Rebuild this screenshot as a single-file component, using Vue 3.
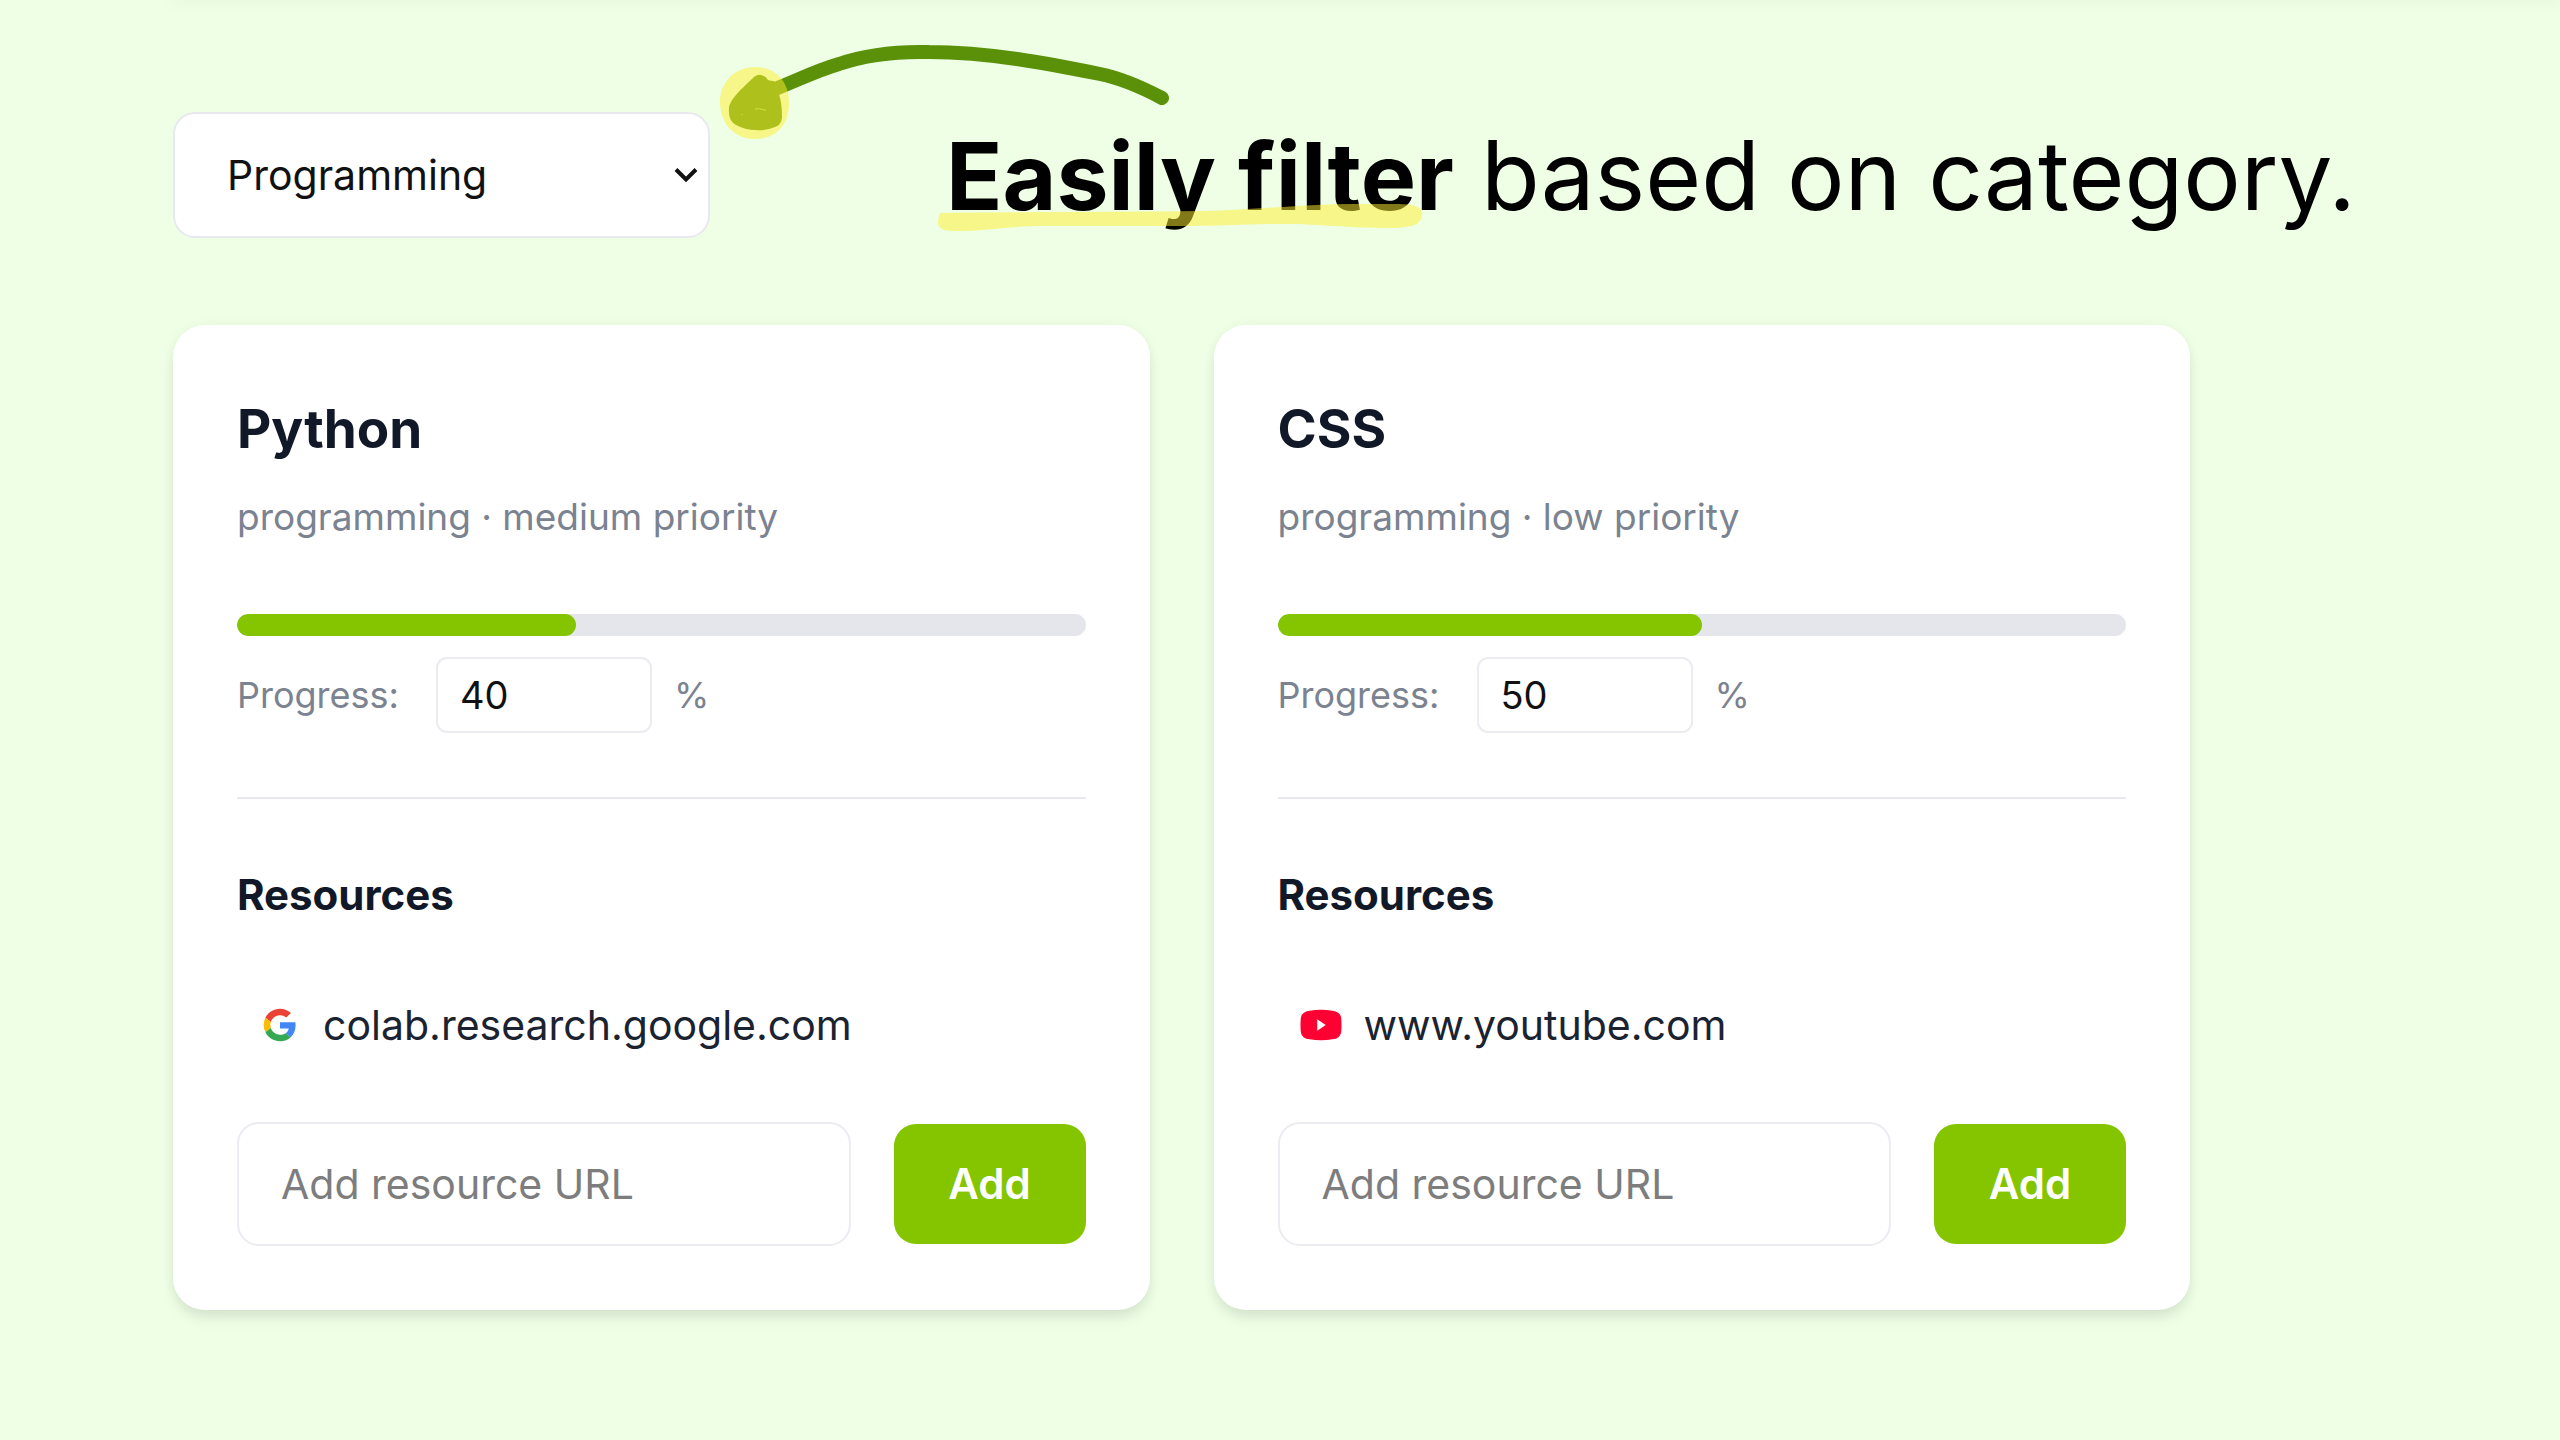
<script setup>
import { ref } from 'vue'

const category = ref('programming')
const categories = [
  { value: 'all', label: 'All categories' },
  { value: 'programming', label: 'Programming' },
  { value: 'design', label: 'Design' }
]

const skills = ref([
  { id: 'python', name: 'Python', meta: 'programming · medium priority', progress: 40, site: 'colab.research.google.com', icon: 'google', draft: '' },
  { id: 'css', name: 'CSS', meta: 'programming · low priority', progress: 50, site: 'www.youtube.com', icon: 'youtube', draft: '' }
])
</script>

<template>
  <main class="page">
    <div class="panel-edge"></div>

    <header class="hero">
      <div class="filter">
        <select v-model="category" class="filter-select" aria-label="Category">
          <option v-for="c in categories" :key="c.value" :value="c.value">{{ c.label }}</option>
        </select>
        <svg class="chevron" viewBox="0 0 24 16" aria-hidden="true">
          <path d="M2 2.500 L12 12.500 L22 2.500" fill="none" stroke="#111" stroke-width="4" />
        </svg>
      </div>

      <h1 class="headline">
        <strong class="marked">Easily filter<svg class="marker" viewBox="0 0 486 30" aria-hidden="true">
          <path d="M3 10 C90 9 180 9 266 8 C320 7 365 1 417 1 H462 Q480 1 484 7 Q487 14 482 19 Q477 25 450 25 C410 25 385 21 346 21 C310 21 290 23 250 23 H110 C70 23 50 28 18 28 C5 28 1 25 1 19 Q1 15 3 10 Z" fill="#ffee30" fill-opacity=".51" />
        </svg></strong> based on category.
      </h1>

      <svg class="arrow" viewBox="0 0 450 100" aria-hidden="true">
        <path d="M55 49 C76 41 95 31 119 24 C142 16 170 11 209 12 C270 12 330 24 380 34 C405 39 425 49 442 58" fill="none" stroke="#5a9108" stroke-width="14" stroke-linecap="round" stroke-linejoin="round" />
        <path d="M41 35 Q46 36 48 40 Q51 41 54 41 L59 54 C62 64 62 72 62 78 Q61 85 55 87 Q46 91 36 90 Q25 90 16 85 Q8 81 9 68 C10 58 25 46 34 37 Q38 34 41 35 Z" fill="#5a9108" />
        <path d="M35 69 q5 -1 9 1 h2 M22 74 v1" fill="none" stroke="#a7d066" stroke-width="1" />
        <path d="M35 27 C57 27 70 44 69 64 C69 85 56 99 35 99 C14 99 0 83 0 62 C0 42 15 27 35 27 Z" fill="#ffee30" fill-opacity=".51" />
      </svg>
    </header>

    <section class="cards">
      <article v-for="s in skills" :key="s.id" class="card">
        <h2 class="name">{{ s.name }}</h2>
        <p class="meta">{{ s.meta }}</p>

        <div class="track"><div class="fill" :style="{ width: s.progress + '%' }"></div></div>

        <div class="progress-row">
          <label class="progress-label" :for="s.id + '-progress'">Progress:</label>
          <input :id="s.id + '-progress'" v-model="s.progress" class="progress-input" type="number" min="0" max="100" />
          <span>%</span>
        </div>

        <hr class="divider" />

        <h3 class="subhead">Resources</h3>
        <a class="resource" href="#">
          <svg v-if="s.icon === 'google'" class="icon" viewBox="-4 -4 56 56" aria-hidden="true">
            <path fill="#EA4335" d="M24 9.500c3.540 0 6.710 1.220 9.210 3.600l6.850-6.850C35.900 2.380 30.470 0 24 0 14.620 0 6.510 5.380 2.560 13.220l7.980 6.190C12.430 13.720 17.740 9.500 24 9.500z" />
            <path fill="#4285F4" d="M46.980 24.550c0-1.570-.15-3.090-.38-4.550H24v9.020h12.940c-.58 2.960-2.260 5.480-4.780 7.180l7.730 6c4.510-4.180 7.090-10.360 7.090-17.650z" />
            <path fill="#FBBC05" d="M10.530 28.590c-.48-1.450-.76-2.990-.76-4.590s.27-3.140.76-4.590l-7.980-6.190C.92 16.460 0 20.120 0 24c0 3.880.92 7.540 2.560 10.780l7.970-6.190z" />
            <path fill="#34A853" d="M24 48c6.480 0 11.930-2.130 15.890-5.810l-7.730-6c-2.150 1.450-4.920 2.300-8.160 2.300-6.260 0-11.570-4.220-13.470-9.910l-7.980 6.190C6.510 42.620 14.620 48 24 48z" />
          </svg>
          <svg v-else class="icon" viewBox="0 0 44 34" aria-hidden="true">
            <path fill="#ff0033" d="M10 2 Q22 0 34 2 Q42 3 43 9 Q44 17 43 25 Q42 31 34 32 Q22 34 10 32 Q2 31 1 25 Q0 17 1 9 Q2 3 10 2 Z" />
            <path fill="#fff" d="M18 11 L27 17 L18 23 Z" />
          </svg>
          <span>{{ s.site }}</span>
        </a>

        <form class="add-form" @submit.prevent>
          <input v-model="s.draft" class="url-input" type="text" placeholder="Add resource URL" aria-label="Add resource URL" />
          <button class="add-button" type="submit">Add</button>
        </form>
      </article>
    </section>
  </main>
</template>

<style>
body {
  background: #eeffe6;
}
</style>

<style scoped>
.page,
.page * {
  box-sizing: border-box;
}

.page {
  min-height: 100vh;
  padding: 0 173px 130px;
  overflow: hidden;
  background: #eeffe6;
  font-family: Inter, "Open Sans", sans-serif;
  color: #111827;
}

/* shadow cast by the panel above the fold */
.panel-edge {
  height: 0;
  margin-right: -173px;
  box-shadow: 0 0 14px 3px rgba(0, 0, 0, .05);
}

.hero {
  position: relative;
  display: flex;
  align-items: center;
  padding: 112px 0 87px;
}

.filter {
  position: relative;
  flex: none;
  width: 537px;
  margin-right: 236px;
}

.filter-select {
  display: block;
  width: 100%;
  height: 126px;
  padding: 0 52px;
  border: 2px solid #e8e9ee;
  border-radius: 22px;
  appearance: none;
  background: #fff;
  font: 400 41px/60px Inter, sans-serif;
  color: #111;
}

.chevron {
  position: absolute;
  top: 55px;
  right: 12px;
  width: 24px;
  height: 16px;
  pointer-events: none;
}

.headline {
  margin: 0;
  font-size: 96px;
  line-height: 120px;
  font-weight: 400;
  color: #000;
  white-space: nowrap;
}

.marked {
  position: relative;
  font-size: 93px;
  font-weight: 700;
}

.marker {
  position: absolute;
  left: -9px;
  bottom: -1px;
  width: 486px;
  height: 30px;
}

.arrow {
  position: absolute;
  left: 547px;
  top: 40px;
  width: 450px;
  height: 100px;
  pointer-events: none;
}

.cards {
  display: grid;
  grid-template-columns: repeat(2, minmax(0, 1fr));
  gap: 64px;
  margin-right: 197px;
}

.card {
  padding: 64px;
  border-radius: 32px;
  background: #fff;
  box-shadow: 0 10px 16px -3px rgba(0, 0, 0, .09), 0 2px 14px rgba(0, 0, 0, .05);
}

.name {
  margin: 0 0 20px;
  font-size: 53px;
  line-height: 80px;
  font-weight: 700;
}

.meta {
  margin: 0 0 69px;
  font-size: 37px;
  line-height: 56px;
  color: #7b8290;
}

.track {
  height: 22px;
  margin-bottom: 21px;
  border-radius: 11px;
  overflow: hidden;
  background: #e5e6eb;
}

.fill {
  height: 100%;
  border-radius: 11px;
  background: #84c500;
}

.progress-row {
  display: flex;
  align-items: center;
  font-size: 36px;
  line-height: 56px;
  color: #7b8290;
}

.progress-label {
  width: 199px;
}

.progress-input {
  width: 216px;
  height: 76px;
  margin-right: 22px;
  padding: 0 22px;
  border: 2px solid #ebecf1;
  border-radius: 11px;
  appearance: textfield;
  background: #fff;
  font: 400 38px/56px Inter, sans-serif;
  color: #111;
}

.progress-input::-webkit-inner-spin-button {
  appearance: none;
  margin: 0;
}

.divider {
  height: 2px;
  margin: 64px 0;
  border: 0;
  background: #e8e9ee;
}

.subhead {
  margin: 0 0 66px;
  font-size: 42px;
  line-height: 64px;
  font-weight: 700;
}

.resource {
  display: flex;
  align-items: center;
  gap: 22px;
  margin-bottom: 65px;
  padding-left: 22px;
  font-size: 41px;
  line-height: 64px;
  color: #1b2331;
  text-decoration: none;
}

.icon {
  width: 42px;
  height: 38px;
}

.add-form {
  display: flex;
  align-items: center;
  gap: 43px;
}

.url-input {
  flex: 1;
  min-width: 0;
  height: 124px;
  padding: 0 42px;
  border: 2px solid #ebecf1;
  border-radius: 22px;
  background: #fff;
  font: 400 41px/60px Inter, sans-serif;
  color: #111;
}

.url-input::placeholder {
  color: #7d7d7d;
  opacity: 1;
}

.add-button {
  width: 192px;
  height: 120px;
  border: 0;
  border-radius: 22px;
  background: #84c500;
  font: 600 42px/60px Inter, sans-serif;
  color: #fff;
}
</style>
